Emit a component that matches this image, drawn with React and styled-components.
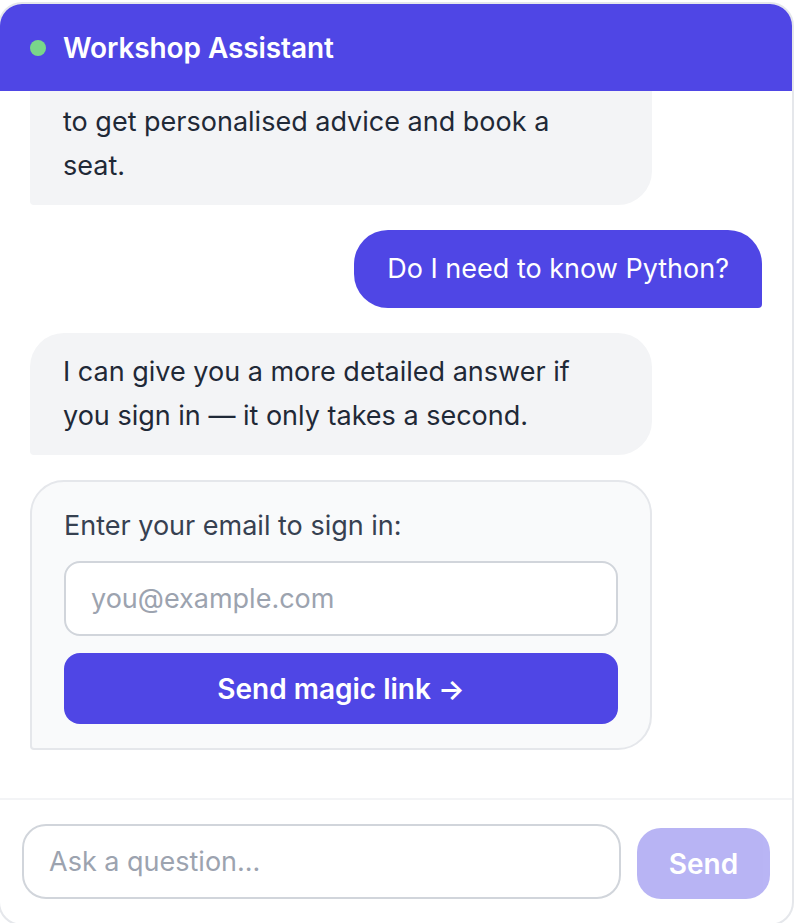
import React from 'react';
import styled, { createGlobalStyle } from 'styled-components';

const GlobalStyle = createGlobalStyle`
  html, body {
    margin: 0;
    padding: 0;
    background: #ffffff;
    overflow: hidden;
  }
  * {
    box-sizing: border-box;
  }
`;

const Widget = styled.div`
  width: 796px;
  height: 924px;
  margin: 2px 0 0 -2px;
  display: flex;
  flex-direction: column;
  background: #ffffff;
  border: 2px solid #e5e7eb;
  border-radius: 24px;
  overflow: hidden;
  font-family: Inter, 'Noto Sans', sans-serif;
`;

const Header = styled.div`
  position: relative;
  z-index: 1;
  flex: 0 0 auto;
  height: 87px;
  display: flex;
  align-items: center;
  gap: 17px;
  padding: 0 30px;
  background: #4f46e5;
  color: #ffffff;
`;

const StatusDot = styled.span`
  width: 16px;
  height: 16px;
  border-radius: 50%;
  background: #79d68a;
`;

const Title = styled.h1`
  margin: 0;
  font-size: 28px;
  font-weight: 600;
  letter-spacing: -0.1px;
`;

// scrolled to the bottom: older content runs up under the header
const Messages = styled.div`
  flex: 1 1 auto;
  min-height: 0;
  overflow: hidden;
  display: flex;
  flex-direction: column;
  justify-content: flex-end;
  gap: 25px;
  padding: 30px 30px 48px;
  border-bottom: 2px solid #f3f4f6;
`;

const Bubble = styled.div`
  flex: 0 0 auto;
  max-width: 622px;
  padding: 17px 33px;
  font-size: 27px;
  line-height: 44px;
  align-self: ${p => (p.$mine ? 'flex-end' : 'flex-start')};
  background: ${p => (p.$mine ? '#4f46e5' : '#f3f4f6')};
  color: ${p => (p.$mine ? '#ffffff' : '#1f2937')};
  border-radius: ${p => (p.$mine ? '34px 34px 4px 34px' : '34px 34px 34px 4px')};
`;

const BotBubble = styled(Bubble)`
  width: 622px;
  padding-right: 40px;
`;

// the oldest visible message, partly scrolled up under the header
const CutBubble = styled(BotBubble)`
  padding-top: 50px;
`;

const SignInCard = styled.form`
  flex: 0 0 auto;
  align-self: flex-start;
  width: 622px;
  padding: 22px 32px 24px;
  display: flex;
  flex-direction: column;
  background: #f9fafb;
  border: 2px solid #e5e7eb;
  border-radius: 34px 34px 34px 4px;
`;

const Label = styled.label`
  font-size: 27px;
  line-height: 44px;
  color: #374151;
  margin-bottom: 13px;
`;

const TextInput = styled.input`
  width: 100%;
  height: 75px;
  padding: 0 25px;
  font-family: inherit;
  font-size: 27px;
  color: #111827;
  background: #ffffff;
  border: 2px solid #d1d5db;
  border-radius: ${p => p.$radius || 16}px;
  outline: none;

  &::placeholder {
    color: #9ca3af;
  }
`;

const PrimaryButton = styled.button`
  height: 71px;
  border: none;
  font-family: inherit;
  font-size: 28px;
  font-weight: 600;
  color: #ffffff;
  background: #4f46e5;
  border-radius: 16px;
  cursor: pointer;
`;

const MagicButton = styled(PrimaryButton)`
  width: 100%;
  margin-top: 17px;
`;

const Footer = styled.div`
  flex: 0 0 auto;
  display: flex;
  align-items: flex-end;
  gap: 16px;
  padding: 24px 22px 25px;
`;

const SendButton = styled(PrimaryButton)`
  flex: 0 0 133px;
  border-radius: 24px;
  opacity: 0.4;
  cursor: default;
`;

export default function App() {
  return (
    <>
      <GlobalStyle />
      <Widget>
        <Header>
          <StatusDot />
          <Title>Workshop Assistant</Title>
        </Header>
        <Messages>
          <CutBubble>to get personalised advice and book a seat.</CutBubble>
          <Bubble $mine>Do I need to know Python?</Bubble>
          <BotBubble>
            I can give you a more detailed answer if you sign in — it only takes a second.
          </BotBubble>
          <SignInCard onSubmit={e => e.preventDefault()}>
            <Label htmlFor="email">Enter your email to sign in:</Label>
            <TextInput id="email" type="email" placeholder="you@example.com" />
            <MagicButton type="submit">Send magic link →</MagicButton>
          </SignInCard>
        </Messages>
        <Footer>
          <TextInput placeholder="Ask a question..." $radius={24} />
          <SendButton type="button" disabled>Send</SendButton>
        </Footer>
      </Widget>
    </>
  );
}
